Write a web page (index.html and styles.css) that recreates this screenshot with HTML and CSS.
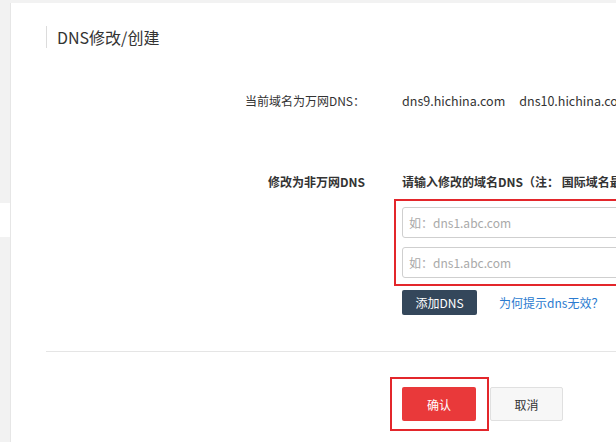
FILE: index.html
```html
<!DOCTYPE html>
<html lang="zh-CN">
<head>
<meta charset="utf-8">
<title>DNS修改/创建</title>
<link rel="stylesheet" href="styles.css">
</head>
<body>
<div class="layout">
  <div class="side"><div class="side-gap"></div></div>
  <div class="panel">
    <h2 class="title">DNS修改/创建</h2>
    <div class="row row-current">
      <div class="label">当前域名为万网DNS：</div>
      <div class="value"><span class="dns">dns9.hichina.com</span><span class="dns">dns10.hichina.com</span></div>
    </div>
    <div class="row row-change">
      <div class="label strong">修改为非万网DNS</div>
      <div class="value">
        <div class="hint">请输入修改的域名DNS（注： 国际域名最多可以设置13个DNS）</div>
        <div class="inputs">
          <input class="field" type="text" placeholder="如：dns1.abc.com">
          <input class="field" type="text" placeholder="如：dns1.abc.com">
        </div>
        <div class="actions">
          <button class="btn btn-dark" type="button">添加DNS</button>
          <a class="link" href="#">为何提示dns无效？</a>
        </div>
      </div>
    </div>
    <div class="divider"></div>
    <div class="footer">
      <span class="mark"><button class="btn btn-primary" type="button">确认</button></span>
      <button class="btn btn-default" type="button">取消</button>
    </div>
  </div>
</div>
</body>
</html>
```
FILE: styles.css
```css
html, body {
  margin: 0;
  padding: 0;
  height: 100%;
  overflow: hidden;
}
body {
  background: #f2f2f2;
  font-family: "Noto Sans CJK SC", "Noto Sans", sans-serif;
  color: #333;
  font-size: 12px;
}
.layout {
  display: flex;
  width: 900px;
  min-height: 442px;
}
.side {
  width: 10px;
  flex: none;
  background: #f2f2f2;
}
.side-gap {
  margin-top: 203px;
  height: 34px;
  background: #fff;
}
.panel {
  flex: 1;
  margin-top: 3px;
  background: #fff;
  border-left: 1px solid #e6e6e6;
  padding-left: 35px;
}
.title {
  margin: 23px 0 0;
  height: 22px;
  line-height: 22px;
  border-left: 1px solid #dcdcdc;
  padding-left: 10px;
  font-size: 16px;
  font-weight: normal;
  color: #333;
}
.row {
  display: grid;
  grid-template-columns: 319px 1fr;
  column-gap: 37px;
  line-height: 20px;
}
.row-current {
  margin-top: 43px;
}
.row-change {
  margin-top: 61px;
}
.label {
  text-align: right;
}
.strong,
.hint {
  font-weight: bold;
}
.hint {
  white-space: nowrap;
}
.value {
  white-space: nowrap;
}
.dns {
  font-size: 12.5px;
  margin-right: 14px;
}
.inputs {
  margin-top: 15px;
  width: 320px;
  display: flex;
  flex-direction: column;
  gap: 9px;
  outline: 2px solid #e3262b;
  outline-offset: 6px;
}
.field {
  box-sizing: border-box;
  height: 31px;
  width: 100%;
  border: 1px solid #cfcfcf;
  border-radius: 3px;
  padding: 0 6px;
  font-family: inherit;
  font-size: 12px;
  color: #333;
}
.field::placeholder {
  color: #a9a9a9;
}
.actions {
  margin-top: 12px;
  display: flex;
  align-items: center;
  gap: 22px;
}
.btn {
  box-sizing: border-box;
  font-family: inherit;
  font-size: 12px;
  border: none;
  border-radius: 2px;
  padding: 0;
  cursor: pointer;
}
.btn-dark {
  width: 75px;
  height: 25px;
  background: #34475b;
  color: #fff;
}
.link {
  color: #2b7bd0;
  text-decoration: none;
}
.divider {
  margin-top: 36px;
  border-top: 1px solid #e5e5e5;
}
.footer {
  padding-left: 344px;
  padding-top: 25px;
  display: flex;
  align-items: center;
  gap: 1px;
}
.mark {
  display: flex;
  border: 2px solid #e3262b;
  padding: 8px 11px 8px 10px;
}
.btn-primary {
  width: 74px;
  height: 34px;
  background: #e9393a;
  color: #fff;
}
.btn-default {
  width: 73px;
  height: 34px;
  background: #f7f7f7;
  border: 1px solid #e0e0e0;
  color: #333;
}
```
